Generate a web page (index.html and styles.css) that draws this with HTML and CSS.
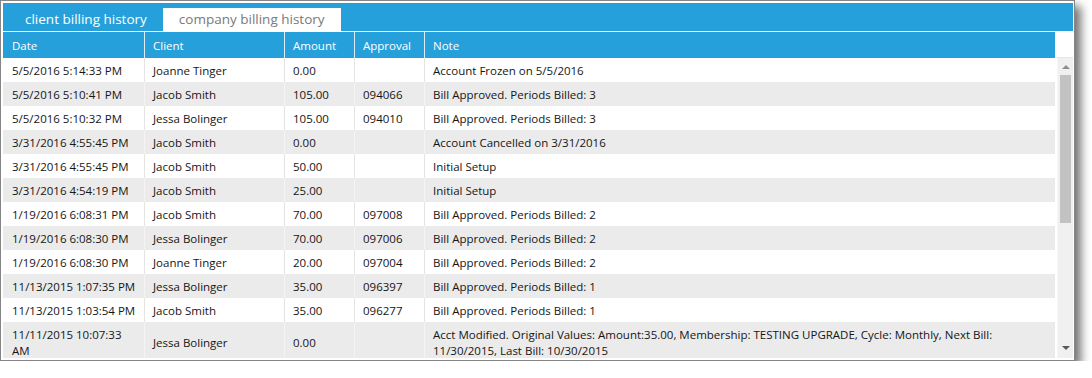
FILE: index.html
```html
<!DOCTYPE html>
<html>
<head>
<meta charset="utf-8">
<link rel="stylesheet" href="styles.css">
</head>
<body>
<div class="window">
  <div class="tabbar">
    <div class="tab tab-active">client billing history</div>
    <div class="tab tab-idle">company billing history</div>
  </div>
  <div class="head">
    <div class="grid-row head-row">
      <div class="cell">Date</div>
      <div class="cell">Client</div>
      <div class="cell">Amount</div>
      <div class="cell">Approval</div>
      <div class="cell">Note</div>
    </div>
    <div class="head-corner"></div>
  </div>
  <div class="body">
    <div class="rows">
      <div class="grid-row row"><div class="cell">5/5/2016 5:14:33 PM</div><div class="cell">Joanne Tinger</div><div class="cell">0.00</div><div class="cell"></div><div class="cell">Account Frozen on 5/5/2016</div></div>
      <div class="grid-row row alt"><div class="cell">5/5/2016 5:10:41 PM</div><div class="cell">Jacob Smith</div><div class="cell">105.00</div><div class="cell">094066</div><div class="cell">Bill Approved. Periods Billed: 3</div></div>
      <div class="grid-row row"><div class="cell">5/5/2016 5:10:32 PM</div><div class="cell">Jessa Bolinger</div><div class="cell">105.00</div><div class="cell">094010</div><div class="cell">Bill Approved. Periods Billed: 3</div></div>
      <div class="grid-row row alt"><div class="cell">3/31/2016 4:55:45 PM</div><div class="cell">Jacob Smith</div><div class="cell">0.00</div><div class="cell"></div><div class="cell">Account Cancelled on 3/31/2016</div></div>
      <div class="grid-row row"><div class="cell">3/31/2016 4:55:45 PM</div><div class="cell">Jacob Smith</div><div class="cell">50.00</div><div class="cell"></div><div class="cell">Initial Setup</div></div>
      <div class="grid-row row alt"><div class="cell">3/31/2016 4:54:19 PM</div><div class="cell">Jacob Smith</div><div class="cell">25.00</div><div class="cell"></div><div class="cell">Initial Setup</div></div>
      <div class="grid-row row"><div class="cell">1/19/2016 6:08:31 PM</div><div class="cell">Jacob Smith</div><div class="cell">70.00</div><div class="cell">097008</div><div class="cell">Bill Approved. Periods Billed: 2</div></div>
      <div class="grid-row row alt"><div class="cell">1/19/2016 6:08:30 PM</div><div class="cell">Jessa Bolinger</div><div class="cell">70.00</div><div class="cell">097006</div><div class="cell">Bill Approved. Periods Billed: 2</div></div>
      <div class="grid-row row"><div class="cell">1/19/2016 6:08:30 PM</div><div class="cell">Joanne Tinger</div><div class="cell">20.00</div><div class="cell">097004</div><div class="cell">Bill Approved. Periods Billed: 2</div></div>
      <div class="grid-row row alt"><div class="cell">11/13/2015 1:07:35 PM</div><div class="cell">Jessa Bolinger</div><div class="cell">35.00</div><div class="cell">096397</div><div class="cell">Bill Approved. Periods Billed: 1</div></div>
      <div class="grid-row row"><div class="cell">11/13/2015 1:03:54 PM</div><div class="cell">Jacob Smith</div><div class="cell">35.00</div><div class="cell">096277</div><div class="cell">Bill Approved. Periods Billed: 1</div></div>
      <div class="grid-row row alt tall"><div class="cell">11/11/2015 10:07:33<br>AM</div><div class="cell">Jessa Bolinger</div><div class="cell">0.00</div><div class="cell"></div><div class="cell">Acct Modified. Original Values: Amount:35.00, Membership: TESTING UPGRADE, Cycle: Monthly, Next Bill:<br>11/30/2015, Last Bill: 10/30/2015</div></div>
    </div>
    <div class="scrollbar">
      <div class="arrow arrow-up"></div>
      <div class="track"><div class="thumb"></div></div>
      <div class="arrow arrow-down"></div>
    </div>
  </div>
</div>
</body>
</html>
```
FILE: styles.css
```css
* { box-sizing: border-box; }
html, body { margin: 0; padding: 0; background: #fff; }
body {
  font-family: "Open Sans", "Noto Sans", sans-serif;
  font-size: 11.5px;
  color: #151515;
}
.window {
  width: 1075px;
  height: 361px;
  border: 1px solid #858585;
  padding: 2px 1px 1px 2px;
  background: #fff;
  box-shadow: 6px 6px 9px rgba(0, 0, 0, 0.55);
  display: flex;
  flex-direction: column;
  overflow: hidden;
}
.tabbar {
  height: 28px;
  background: #26a0da;
  display: flex;
  align-items: flex-end;
  padding-left: 6px;
  border-bottom: 1px solid #fff;
  box-sizing: content-box;
}
.tab {
  height: 23px;
  padding: 0 16px;
  font-size: 13.5px;
  line-height: 23px;
  white-space: nowrap;
}
.tab-active { color: #fff; }
.tab-idle { background: #fff; color: #7a7a7a; margin-bottom: -1px; height: 24px; line-height: 22px; }
.head {
  display: flex;
  height: 26px;
}
.grid-row {
  display: grid;
  grid-template-columns: 142px 140px 70px 70px 630px;
}
.head-row {
  background: #26a0da;
  color: #fff;
  width: 1052px;
  height: 26px;
}
.head-row .cell {
  border-right: 1px solid #d9eef8;
  padding: 1px 8px 0 8px;
  line-height: 26px;
  white-space: nowrap;
}
.head-row .cell:first-child { padding-left: 9px; }
.head-row .cell:last-child { border-right: 0; }
.head-corner {
  width: 18px;
  background: #fff;
  border-left: 2px solid #fff;
  border-bottom: 1px solid #e6e6e6;
}
.body {
  display: flex;
  height: 300px;
  overflow: hidden;
}
.rows {
  width: 1052px;
}
.row {
  height: 24px;
  background: #fff;
}
.row.alt { background: #ebebeb; }
.row .cell {
  padding: 1px 2px 0 8px;
  display: flex;
  align-items: center;
  line-height: 16px;
  white-space: nowrap;
  border-right: 1px solid #e4e4e4;
}
.row.alt .cell { border-right-color: #f4f4f4; }
.row .cell:first-child { padding-left: 9px; }
.row .cell:last-child { border-right: 0; }
.row.tall { height: 40px; }
.scrollbar {
  width: 18px;
  margin-left: 2px;
  background: #f0f0f0;
  display: flex;
  flex-direction: column;
  align-items: center;
  border-left: 1px solid #f7f7f7;
}
.arrow {
  width: 0;
  height: 0;
  border-left: 4px solid transparent;
  border-right: 4px solid transparent;
}
.arrow-up {
  margin-top: 7px;
  border-bottom: 4px solid #8f8f8f;
}
.arrow-down {
  margin-bottom: 8px;
  border-top: 4px solid #5a5a5a;
}
.track {
  flex: 1;
  width: 100%;
  padding: 6px 2px 0 2px;
}
.thumb {
  height: 148px;
  background: #c2c2c2;
}
```
